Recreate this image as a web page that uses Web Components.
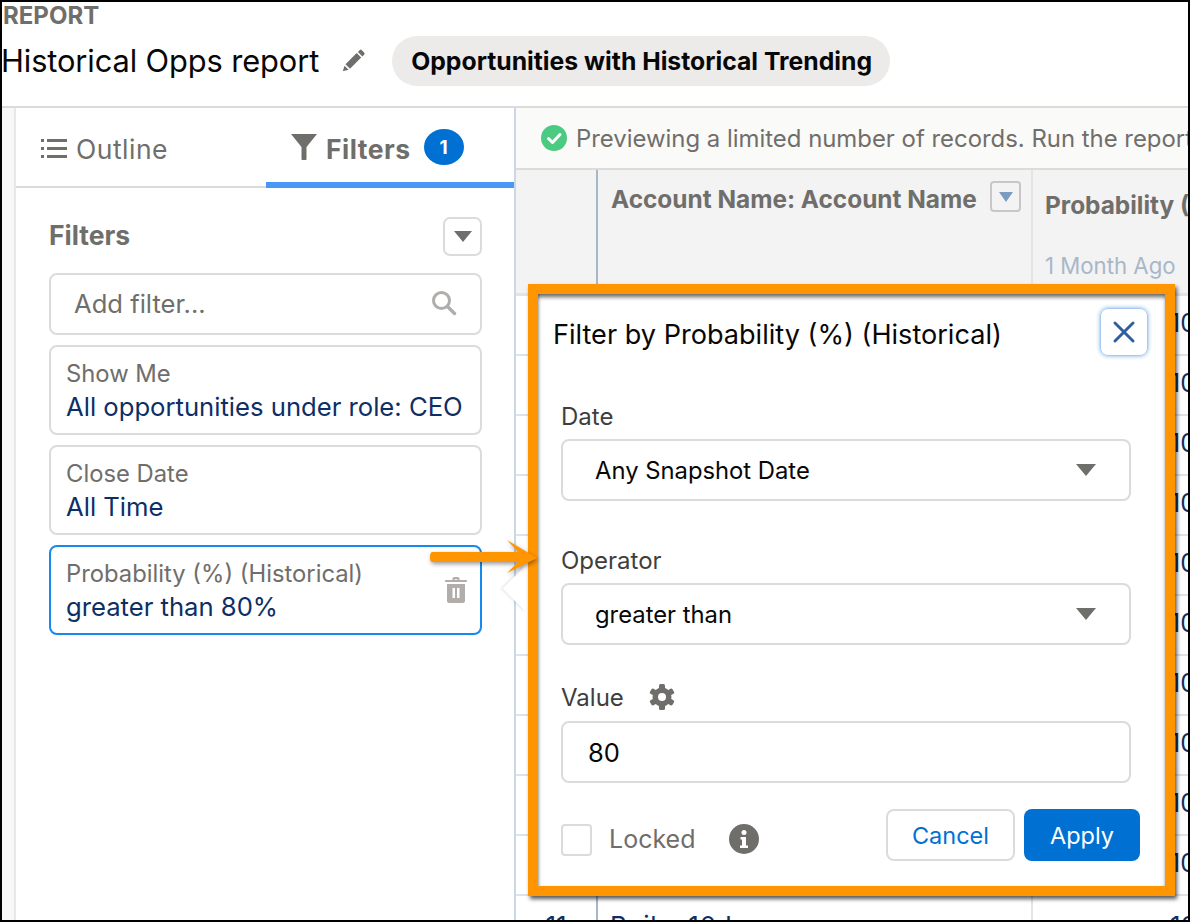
<!DOCTYPE html>
<html>
<head>
<meta charset="utf-8">
<style>
  html, body { margin: 0; background: #fff; }
  body { font-family: Inter, "Liberation Sans", sans-serif; }
</style>
</head>
<body>
<report-app>
  <report-header slot="header" kicker="REPORT" name="Historical Opps report" type="Opportunities with Historical Trending"></report-header>
  <side-panel slot="side">
    <filter-card label="Show Me">All opportunities under role: CEO</filter-card>
    <filter-card label="Close Date">All Time</filter-card>
    <filter-card label="Probability (%) (Historical)" active>greater than 80%</filter-card>
  </side-panel>
  <report-table slot="main"></report-table>
  <popover-nub slot="over"></popover-nub>
  <filter-popover slot="over"></filter-popover>
  <orange-arrow slot="over"></orange-arrow>
</report-app>

<script>
const icons = {
  pencil: '<path d="M17.6 1.2a1.6 1.6 0 0 1 2.3 0l2.2 2.2a1.6 1.6 0 0 1 0 2.3l-1.7 1.7-4.5-4.5zM14.7 4l4.5 4.5L8 19.7l-4.5-4.5zM2.5 16.7l4.1 4.1-5 1.2a.5.5 0 0 1-.6-.6z"/>',
  search: '<circle cx="10.5" cy="10.5" r="8" fill="none" stroke="currentColor" stroke-width="3"/><path d="M16.5 16.5l7 7" fill="none" stroke="currentColor" stroke-width="3.4" stroke-linecap="round"/>',
  trash: '<path d="M8.5 3V1.8C8.5.8 9.3 0 10.3 0h3.4c1 0 1.800.8 1.800 1.800V3H22c.6 0 1 .4 1 1s-.4 1-1 1H2c-.6 0-1-.4-1-1s.4-1 1-1zm2-.8V3h3v-.8zM3 7h18v17c0 1.100-.9 2-2 2H5c-1.100 0-2-.9-2-2zm5.500 4v10h2.500V11zm4.500 0v10h2.500V11z"/>',
  gear: '<g transform="translate(13 13)"><rect x="-3" y="-13" width="6" height="26" rx="1.500"/><rect x="-3" y="-13" width="6" height="26" rx="1.500" transform="rotate(60)"/><rect x="-3" y="-13" width="6" height="26" rx="1.500" transform="rotate(120)"/><circle r="9.500"/><circle r="4" fill="#fff"/></g>'
};

class ReportHeader extends HTMLElement {
  constructor() {
    super();
    this.attachShadow({ mode: "open" }).innerHTML = `<style>
      :host { display: block; height: 106px; box-sizing: border-box; border-bottom: 2px solid #dddbda; background: #fff; }
      #kicker { font-size: 24px; line-height: 28px; font-weight: 700; color: #706e6b; padding-left: 1px; }
      #row { display: flex; align-items: center; height: 50px; margin-top: 6px; }
      #name { font-size: 30.800px; color: #080707; white-space: nowrap; letter-spacing: -.1px; margin-left: -1px; padding-bottom: 2px; }
      svg { width: 24px; height: 24px; fill: #706e6b; margin-left: 23px; }
      #type { margin-left: 26px; height: 50px; padding: 0 18px 0 19px; display: flex; align-items: center; border-radius: 25px;
        background: #ecebea; font-size: 24.750px; font-weight: 700; color: #080707; white-space: nowrap; }
    </style>
    <div id="kicker"></div>
    <div id="row"><span id="name"></span><svg viewBox="0 0 24 24">${icons.pencil}</svg><span id="type"></span></div>`;
  }
  connectedCallback() {
    for (const id of ["kicker", "name", "type"]) {
      this.shadowRoot.getElementById(id).textContent = this.getAttribute(id);
    }
  }
}
customElements.define("report-header", ReportHeader);

class FilterCard extends HTMLElement {
  static get observedAttributes() { return ["label"]; }
  constructor() {
    super();
    this.attachShadow({ mode: "open" }).innerHTML = `<style>
      :host { display: block; position: relative; height: 90px; box-sizing: border-box; padding: 12px 15px 0 15px;
        border: 2px solid #dddbda; border-radius: 8px; background: #fff; }
      :host([active]) { border-color: #1589ee; }
      #label { font-size: 23.800px; line-height: 30px; color: #706e6b; white-space: nowrap; }
      #value { font-size: 25.650px; line-height: 36px; color: #0d2f66; white-space: nowrap; }
      svg { display: none; position: absolute; right: 12px; top: 30px; width: 24px; height: 26px; fill: #b0adab; }
      :host([active]) svg { display: block; }
    </style>
    <div id="label"></div><div id="value"><slot></slot></div>
    <svg viewBox="0 0 24 26">${icons.trash}</svg>`;
  }
  attributeChangedCallback(name, oldValue, newValue) {
    this.shadowRoot.getElementById("label").textContent = newValue;
  }
}
customElements.define("filter-card", FilterCard);

class SidePanel extends HTMLElement {
  constructor() {
    super();
    this.attachShadow({ mode: "open" }).innerHTML = `<style>
      :host { display: block; width: 498px; height: 100%; box-sizing: border-box; background: #fff; }
      #tabs { display: grid; grid-template-columns: 250px 248px; height: 80px; }
      .tab { display: flex; align-items: center; box-sizing: border-box; padding-top: 4px; border-bottom: 2px solid #dddbda;
        font-size: 26.500px; color: #706e6b; letter-spacing: .5px; }
      .tab.on { border-bottom: 6px solid #4a98f5; font-weight: 700; padding: 4px 0 0 25px; }
      .tab.on .text { padding-top: 4px; }
      .tab:first-child { padding-left: 25px; }
      .tab svg { flex: none; }
      #badge { width: 40px; height: 36px; margin-left: 13px; border-radius: 50%; background: #0070d2; color: #fff;
        display: flex; align-items: center; justify-content: center; font-size: 19px; letter-spacing: 0; }
      #body { padding: 29px 32px 0 33px; display: flex; flex-direction: column; gap: 10px; }
      #head { display: flex; align-items: center; justify-content: space-between; height: 38px; margin-bottom: 8px; }
      #head b { font-size: 26.500px; font-weight: 700; color: #706e6b; margin-top: -2px; }
      #menu { width: 39px; height: 39px; box-sizing: border-box; border: 2px solid #dddbda; border-radius: 7px; display: flex; align-items: center; justify-content: center; }
      #menu i { border: 9px solid transparent; border-top: 11px solid #706e6b; border-bottom: 0; }
      #add { height: 62px; box-sizing: border-box; border: 2px solid #dddbda; border-radius: 8px; display: flex; align-items: center;
        padding: 0 23px 2px 24px; justify-content: space-between; font-size: 25.600px; color: #706e6b; }
      #add span { margin-left: -1px; }
      #add svg { width: 26px; height: 26px; color: #b0adab; }
    </style>
    <div id="tabs">
      <div class="tab">
        <svg width="26" height="20" viewBox="0 0 26 20" fill="#706e6b" style="margin-right:9px"><rect width="3" height="3" y="0"/><rect width="3" height="3" y="8"/><rect width="3" height="3" y="16"/><rect x="6" width="20" height="3" y="0"/><rect x="6" width="20" height="3" y="8"/><rect x="6" width="20" height="3" y="16"/></svg>Outline
      </div>
      <div class="tab on">
        <svg width="26" height="26" viewBox="0 0 26 26" fill="#706e6b" style="margin-right:9px"><path d="M0 0h26L15.500 13v12c0 .6-.4 1-1 1h-3c-.6 0-1-.4-1-1V13z"/></svg><span class="text">Filters</span><span id="badge">1</span>
      </div>
    </div>
    <div id="body">
      <div id="head"><b>Filters</b><span id="menu"><i></i></span></div>
      <div id="add"><span>Add filter...</span><svg viewBox="0 0 26 26">${icons.search}</svg></div>
      <slot></slot>
    </div>`;
  }
}
customElements.define("side-panel", SidePanel);

class ReportTable extends HTMLElement {
  constructor() {
    super();
    const rows = Array.from({ length: 10 }, () => `<div class="row"><span></span><span></span><span class="v">100</span></div>`).join("");
    this.attachShadow({ mode: "open" }).innerHTML = `<style>
      :host { display: block; height: 100%; overflow: hidden; background: #fff; border-left: 2px solid #c9d7e6; box-sizing: border-box; }
      #banner { height: 62px; box-sizing: border-box; border-bottom: 2px solid #dddbda; background: #fafaf9; display: flex; align-items: center;
        padding-left: 25px; font-size: 23.900px; color: #706e6b; white-space: nowrap; overflow: hidden; }
      #banner svg { flex: none; width: 26px; height: 26px; margin-right: 9px; }
      #cols, .row { display: grid; grid-template-columns: 82px 435px 1fr; }
      #cols { height: 123px; background: #f3f3f3; border-bottom: 3px solid #e4e4e4; }
      #cols > div { box-sizing: border-box; }
      #c1 { border-right: 2px solid #a8b7c7; }
      #c2 { border-right: 2px solid #e4e4e4; padding: 11px 10px 0 13px; display: flex; justify-content: space-between; }
      #c2 b, #c3 b { font-size: 24.400px; font-weight: 700; color: #706e6b; white-space: nowrap; line-height: 36px; }
      #drop { width: 31px; height: 31px; box-sizing: border-box; margin-top: 0; border: 2px solid #c9c7c5; border-radius: 4px; display: flex; align-items: center; justify-content: center; }
      #drop i { border: 7px solid transparent; border-top: 10px solid #7a9cc0; border-bottom: 0; }
      #c3 { padding: 17px 0 0 12px; white-space: nowrap; overflow: hidden; }
      #c3 span { display: block; margin-top: 27px; font-size: 22.200px; color: #a8b7c7; line-height: 32px; }
      .row { height: 60px; box-sizing: border-box; border-bottom: 2px solid #dde3ec; font-size: 25px; color: #0d2f66; line-height: 54px; }
      .row > span:nth-child(1) { border-right: 2px solid #a8b7c7; text-align: center; }
      .row > span:nth-child(2) { border-right: 2px solid #e4e4e4; padding-left: 12px; white-space: nowrap; }
      .row > span.v { padding-left: 137px; white-space: nowrap; overflow: hidden; }
      .row.last { line-height: 60px; border-bottom: 0; font-size: 26px; }
      .row.last > span:nth-child(2) { letter-spacing: .8px; }
    </style>
    <div id="banner">
      <svg viewBox="0 0 26 26"><circle cx="13" cy="13" r="13" fill="#4bca81"/><path d="M7.500 13.500l4 4 7.500-8" fill="none" stroke="#fff" stroke-width="3" stroke-linecap="round" stroke-linejoin="round"/></svg>
      Previewing a limited number of records. Run the report to see everything.
    </div>
    <div id="cols">
      <div id="c1"></div>
      <div id="c2"><b>Account Name: Account Name</b><span id="drop"><i></i></span></div>
      <div id="c3"><b>Probability (%)</b><span>1 Month Ago</span></div>
    </div>
    ${rows}
    <div class="row last"><span>11</span><span>Bailey10 Inc</span><span class="v">100</span></div>`;
  }
}
customElements.define("report-table", ReportTable);

class FormField extends HTMLElement {
  constructor() {
    super();
    this.attachShadow({ mode: "open" }).innerHTML = `<style>
      :host { display: block; }
      #label { display: flex; align-items: center; height: 30px; font-size: 24px; color: #3e3e3c; margin-bottom: var(--gap, 8px); }
      #box { height: 62px; box-sizing: border-box; border: 2px solid #dddbda; border-radius: 8px; display: flex; align-items: center;
        justify-content: space-between; padding: 0 34px 0 var(--pad, 32px); font-size: var(--size, 23.800px); color: #080707; }
      i { display: none; border: 10px solid transparent; border-top: 12px solid #706e6b; border-bottom: 0; margin-right: -1px; }
      :host([select]) i { display: block; }
      ::slotted(svg) { margin-left: 25px; }
    </style>
    <div id="label"><span id="text"></span><slot name="after"></slot></div>
    <div id="box"><span><slot></slot></span><i></i></div>`;
  }
  connectedCallback() {
    this.shadowRoot.getElementById("text").textContent = this.getAttribute("label");
  }
}
customElements.define("form-field", FormField);

class PopoverNub extends HTMLElement {
  constructor() {
    super();
    this.attachShadow({ mode: "open" }).innerHTML = `<style>
      :host { position: absolute; left: 507px; top: 571px; width: 31px; height: 31px; display: block; background: #fff; transform: rotate(45deg); box-shadow: -1px 1px 3px rgba(0,0,0,.12); }
    </style>`;
  }
}
customElements.define("popover-nub", PopoverNub);

class FilterPopover extends HTMLElement {
  constructor() {
    super();
    this.attachShadow({ mode: "open" }).innerHTML = `<style>
      :host { position: absolute; left: 526px; top: 282px; width: 647px; height: 612px; box-sizing: border-box; display: block;
        border: 10px solid #ff9500; background: #fff; padding: 14px 24px 0 23px;
        box-shadow: 2px 3px 4px rgba(0,0,0,.65), inset 0 4px 4px -1px rgba(0,0,0,.6), inset 2px 0 3px -1px rgba(0,0,0,.2); }
      #top { display: flex; align-items: center; justify-content: space-between; height: 48px; margin-left: -8px; margin-right: -7px; }
      #title { font-size: 27.100px; color: #080707; white-space: nowrap; padding-top: 4px; }
      #close { width: 48px; height: 48px; box-sizing: border-box; border: 1px solid #a9c9ee; border-radius: 8px; box-shadow: 0 0 4px #7fb2ea; display: flex; align-items: center; justify-content: center; }
      #fields { display: flex; flex-direction: column; margin-top: 45px; width: 570px; }
      form-field:nth-child(2) { margin-top: 44px; }
      form-field:nth-child(3) { margin-top: 37px; --pad: 25px; --gap: 9px; --size: 25.500px; }
      #foot { display: flex; align-items: center; margin-top: 26px; margin-right: 1px; }
      #check { width: 31px; height: 32px; box-sizing: border-box; border: 2px solid #dddbda; border-radius: 4px; margin-top: 10px; }
      #locked { font-size: 25px; color: #706e6b; margin-left: 17px; margin-top: 8px; }
      #info { margin-left: 34px; margin-top: 8px; }
      #btns { margin-left: auto; display: flex; gap: 9px; }
      .btn { height: 52px; box-sizing: border-box; border-radius: 8px; display: flex; align-items: center; justify-content: center; font-size: 23.500px; }
      #cancel { width: 129px; border: 2px solid #dddbda; color: #0070d2; background: #fff; }
      #apply { width: 116px; background: #0070d2; color: #fff; }
    </style>
    <div id="top">
      <span id="title">Filter by Probability (%) (Historical)</span>
      <span id="close"><svg width="24" height="24" viewBox="0 0 24 24"><path d="M3 3l18 18M21 3L3 21" stroke="#2f5f9e" stroke-width="3" stroke-linecap="round"/></svg></span>
    </div>
    <div id="fields">
      <form-field label="Date" select>Any Snapshot Date</form-field>
      <form-field label="Operator" select>greater than</form-field>
      <form-field label="Value">80<svg slot="after" width="26" height="26" viewBox="0 0 26 26" fill="#706e6b">${icons.gear}</svg></form-field>
    </div>
    <div id="foot">
      <span id="check"></span><span id="locked">Locked</span>
      <svg id="info" width="30" height="30" viewBox="0 0 30 30"><circle cx="15" cy="15" r="15" fill="#706e6b"/><circle cx="15" cy="8.500" r="2.500" fill="#fff"/><path d="M11.500 13h5.500v8.500h2V24h-8v-2.500h2V15.500h-1.500z" fill="#fff"/></svg>
      <span id="btns"><span class="btn" id="cancel">Cancel</span><span class="btn" id="apply">Apply</span></span>
    </div>`;
  }
}
customElements.define("filter-popover", FilterPopover);

class OrangeArrow extends HTMLElement {
  constructor() {
    super();
    this.attachShadow({ mode: "open" }).innerHTML = `<style>
      :host { position: absolute; left: 428px; top: 538px; width: 110px; height: 36px; display: block; filter: drop-shadow(1px 2px 2px rgba(0,0,0,.4)); }
      svg { display: block; }
    </style>
    <svg width="110" height="36" viewBox="0 0 110 36"><path d="M3 12h85L77 0l30 18-30 15 11-11H3c-2 0-3-1-3-5s1-5 3-5z" fill="#ff9500"/></svg>`;
  }
}
customElements.define("orange-arrow", OrangeArrow);

class ReportApp extends HTMLElement {
  constructor() {
    super();
    this.attachShadow({ mode: "open" }).innerHTML = `<style>
      :host { display: flex; flex-direction: column; position: relative; width: 1190px; height: 922px; box-sizing: border-box; border: 2px solid #000; overflow: hidden; background: #fff; }
      #body { flex: 1; min-height: 0; display: flex; }
      #gutter { flex: none; width: 12px; background: #f7f7f7; border-right: 2px solid #e8e8e8; }
      #side { width: 498px; flex: none; position: relative; }
      #main { flex: 1; min-width: 0; }
    </style>
    <slot name="header"></slot>
    <div id="body">
      <div id="gutter"></div>
      <div id="side"><slot name="side"></slot></div>
      <div id="main"><slot name="main"></slot></div>
    </div>
    <slot name="over"></slot>`;
  }
}
customElements.define("report-app", ReportApp);
</script>
</body>
</html>
